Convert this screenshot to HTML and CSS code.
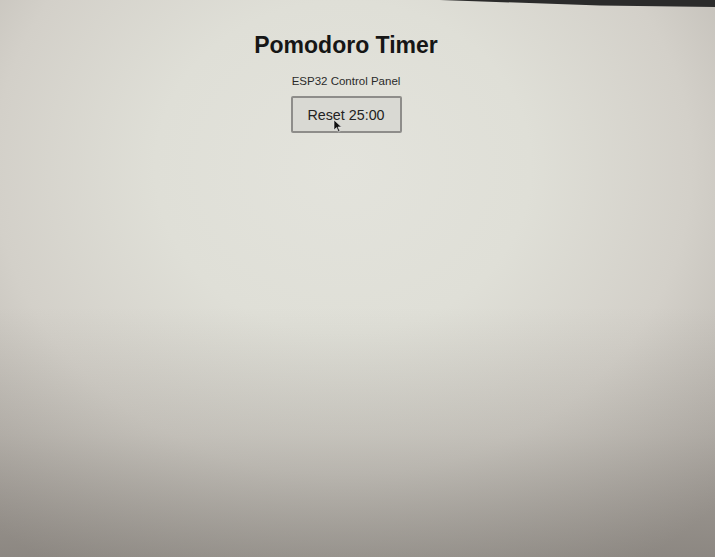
FILE: index.html
```html
<!DOCTYPE html>
<html lang="en">
<head>
    <meta charset="UTF-8">
    <meta name="viewport" content="width=device-width, initial-scale=1.0">
    <title>Pomodoro Timer</title>
    <link rel="stylesheet" href="styles.css">
</head>
<body>
    <div class="panel">
        <h1>Pomodoro Timer</h1>
        <p class="sub">ESP32 Control Panel</p>
        <button class="reset">Reset 25:00</button>
    </div>

    <!-- monitor bezel edge and mouse pointer -->
    <svg class="bezel" width="715" height="10" viewBox="0 0 715 10">
        <polygon points="440,0 715,0 715,7 600,5.5" fill="#2b2b2b"/>
    </svg>
    <svg class="pointer" width="10" height="14" viewBox="0 0 10 14">
        <path d="M1 1 L1 11 L3.5 8.6 L5.5 13 L7 12.3 L5 8 L8.5 8 Z" fill="#111" stroke="#eee" stroke-width="0.6"/>
    </svg>
</body>
</html>
```

FILE: styles.css
```css
html, body {
    height: 100%;
}
body {
    margin: 0;
    font-family: 'Liberation Sans', Arial, sans-serif;
    color: #1a1a1a;
    background:
        linear-gradient(180deg, rgba(0,0,0,0) 0%, rgba(0,0,0,0) 55%, rgba(70,64,58,0.12) 78%, rgba(60,55,50,0.32) 100%),
        radial-gradient(ellipse 75% 85% at 48% 30%, #e3e3dc 0%, #dfdfd7 35%, #d3d0c9 65%, #b2ada7 100%);
    overflow: hidden;
}
.panel {
    text-align: center;
    padding-top: 32px;
    padding-right: 23px;
}
h1 {
    margin: 0;
    font-size: 23px;
    line-height: 27px;
    font-weight: bold;
    color: #161616;
}
.sub {
    margin: 15px 0 0;
    font-size: 11.5px;
    line-height: 14px;
    color: #2a2a2a;
}
.reset {
    margin-top: 8px;
    width: 111px;
    height: 37px;
    font-family: 'Liberation Sans', Arial, sans-serif;
    font-size: 14.3px;
    color: #222;
    background: #d9d9d3;
    border: 2px solid #8e8d8a;
    border-radius: 2px;
}
.bezel {
    position: absolute;
    top: 0;
    left: 0;
}
.pointer {
    position: absolute;
    left: 333px;
    top: 119px;
}
```
